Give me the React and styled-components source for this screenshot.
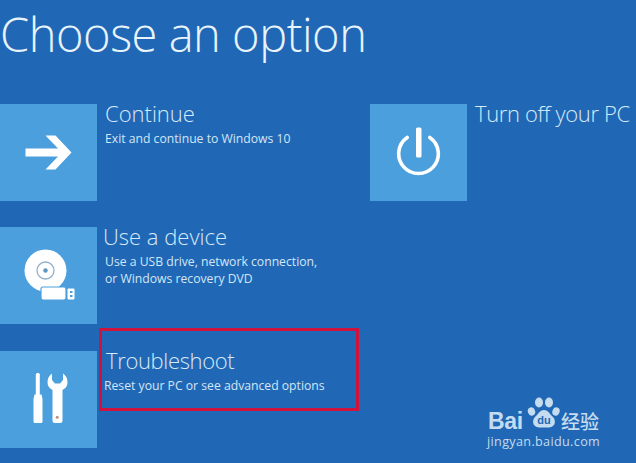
import React from 'react'
import styled, { createGlobalStyle } from 'styled-components'

const GlobalStyle = createGlobalStyle`
  html, body { margin: 0; padding: 0; background: #2068b5; }
  body { width: 636px; height: 463px; overflow: hidden; }
`

const Screen = styled.div`
  position: relative;
  width: 636px;
  height: 463px;
  overflow: hidden;
  background: #2068b5;
  color: #fff;
  font-family: "Open Sans", "Liberation Sans", sans-serif;
`

const Title = styled.h1`
  margin: 0;
  padding: 3px 0 0 0;
  height: 100px;
  box-sizing: border-box;
  font-size: 47px;
  line-height: 62px;
  font-weight: 300;
  letter-spacing: -0.47px;
  color: #e9f3fb;
`

const Columns = styled.div`
  display: grid;
  grid-template-columns: 370px 1fr;
`

const Stack = styled.div`
  display: flex;
  flex-direction: column;
  gap: 26.4px;
  padding-top: 4px;
`

const Option = styled.div`
  display: flex;
  gap: ${p => p.$gap || 8}px;
  height: 97px;
`

const Tile = styled.div`
  flex: 0 0 97px;
  height: 97px;
  background: #4b9fdc;
  display: flex;
  align-items: center;
  justify-content: center;
`

const Copy = styled.div`
  margin-top: -2px;
`

const Name = styled.div`
  margin-left: ${p => p.$shift || 0}px;
  font-size: 22px;
  line-height: 22px;
  font-weight: 300;
  letter-spacing: ${p => p.$tight ? -0.35 : 0}px;
  white-space: nowrap;
  color: #d8e9f7;
`

const Desc = styled.div`
  margin-top: 6px;
  margin-left: ${p => p.$shift || 0}px;
  font-size: 12.2px;
  line-height: 17px;
  white-space: nowrap;
  color: #d4e6f5;
`

const Highlight = styled.div`
  position: absolute;
  left: 99px;
  top: 328px;
  width: 260px;
  height: 83px;
  box-sizing: border-box;
  border: 3px solid #d0123c;
`

const Watermark = styled.div`
  position: absolute;
  left: 488px;
  top: 396px;
  width: 125px;
  color: #c4dbf0;
`

const LogoRow = styled.div`
  display: flex;
  align-items: flex-end;
  height: 34px;
`

const LogoLatin = styled.span`
  font-family: "Liberation Sans", sans-serif;
  font-weight: 700;
  font-size: 23px;
  line-height: 24px;
  letter-spacing: -0.3px;
  width: 39px;
  margin-bottom: -3px;
`

const LogoCjk = styled.span`
  font-family: "Noto Sans CJK SC", sans-serif;
  font-size: 19px;
  line-height: 22px;
  font-weight: 500;
  margin-bottom: -2px;
`

const LogoUrl = styled.div`
  font-family: "Open Sans", sans-serif;
  font-size: 12.6px;
  line-height: 16px;
  margin-top: 4px;
  margin-left: -1px;
  letter-spacing: 0.35px;
  white-space: nowrap;
`

const ArrowIcon = () => (
  <svg width="50" height="40" viewBox="0 0 50 40">
    <path d="M1.500 15.500H34L21.500 2.500H31.500L47.500 19.500L31.500 36.500H21.500L34 23.500H1.500Z" fill="#fff" />
  </svg>
)

const DiscIcon = () => (
  <svg width="56" height="56" viewBox="0 0 56 56">
    <circle cx="24.500" cy="22.500" r="21" fill="#fff" />
    <circle cx="24.500" cy="22.500" r="8.500" fill="none" stroke="#8fb0cc" strokeWidth="1.300" />
    <circle cx="24.500" cy="22.500" r="2.200" fill="#5a95c4" />
    <rect x="20" y="39" width="25" height="13" rx="2" fill="#fff" stroke="#4b9fdc" strokeWidth="1.200" />
    <rect x="46.500" y="40.500" width="7" height="11" rx="1" fill="#fff" />
    <rect x="49" y="43" width="2.500" height="2" fill="#4b9fdc" />
    <rect x="49" y="47" width="2.500" height="2" fill="#4b9fdc" />
  </svg>
)

const ToolsIcon = () => (
  <svg width="40" height="52" viewBox="0 0 40 52">
    <rect x="6.800" y="0" width="4" height="24" rx="1.500" fill="#fff" />
    <path d="M5.500 21.500H12.500L13.500 26V48.500Q13.500 50 12 50H6Q4.500 50 4.500 48.500V26Z" fill="#fff" />
    <path d="M23 0.500Q18.500 3.500 18.500 9Q18.500 14.500 23.500 17V47.500Q23.500 50 26 50H31Q33.500 50 33.500 47.500V17Q38.500 14.500 38.500 9Q38.500 3.500 34 0.500V7L31 10.500H26L23 7Z" fill="#fff" />
    <circle cx="28.200" cy="44.200" r="1.500" fill="#c0907a" />
  </svg>
)

const PowerIcon = () => (
  <svg width="46" height="52" viewBox="0 0 46 52">
    <path d="M11.200 10.500A19.800 19.800 0 1 0 33.800 10.500" fill="none" stroke="#fff" strokeWidth="3.600" strokeLinecap="round" />
    <rect x="20" y="0.500" width="5.500" height="30" rx="1.500" fill="#fff" />
  </svg>
)

const BaiduPaw = () => (
  <svg width="34" height="34" viewBox="0 0 34 34">
    <ellipse cx="4.500" cy="15.500" rx="3.600" ry="4.200" fill="currentColor" transform="rotate(-20 4.500 15.500)" />
    <ellipse cx="12" cy="6.500" rx="4" ry="5" fill="currentColor" />
    <ellipse cx="22" cy="6.500" rx="4" ry="5" fill="currentColor" />
    <ellipse cx="29" cy="15.500" rx="3.600" ry="4.200" fill="currentColor" transform="rotate(20 29 15.500)" />
    <path d="M17 14C12.500 14 11.500 18 8 21C5 24 5 31 12 31.500H22C29 31 29 24 26 21C22.500 18 21.500 14 17 14Z" fill="currentColor" />
    <text x="17" y="28" textAnchor="middle" fontFamily="Liberation Sans, sans-serif" fontSize="11" fontWeight="700" fill="#2068b5">du</text>
  </svg>
)

const App = () => (
  <Screen>
    <GlobalStyle />
    <Title>Choose an option</Title>
    <Columns>
      <Stack>
        <Option>
          <Tile><ArrowIcon /></Tile>
          <Copy>
            <Name>Continue</Name>
            <Desc>Exit and continue to Windows 10</Desc>
          </Copy>
        </Option>
        <Option>
          <Tile><DiscIcon /></Tile>
          <Copy>
            <Name $shift={-2}>Use a device</Name>
            <Desc>Use a USB drive, network connection,<br />or Windows recovery DVD</Desc>
          </Copy>
        </Option>
        <Option $gap={9}>
          <Tile><ToolsIcon /></Tile>
          <Copy>
            <Name $tight>Troubleshoot</Name>
            <Desc $shift={-2}>Reset your PC or see advanced options</Desc>
          </Copy>
        </Option>
      </Stack>
      <Stack>
        <Option>
          <Tile><PowerIcon /></Tile>
          <Copy>
            <Name $tight>Turn off your PC</Name>
          </Copy>
        </Option>
      </Stack>
    </Columns>
    <Highlight />
    <Watermark>
      <LogoRow>
        <LogoLatin>Bai</LogoLatin>
        <BaiduPaw />
        <LogoCjk>经验</LogoCjk>
      </LogoRow>
      <LogoUrl>jingyan.baidu.com</LogoUrl>
    </Watermark>
  </Screen>
)

export default App
